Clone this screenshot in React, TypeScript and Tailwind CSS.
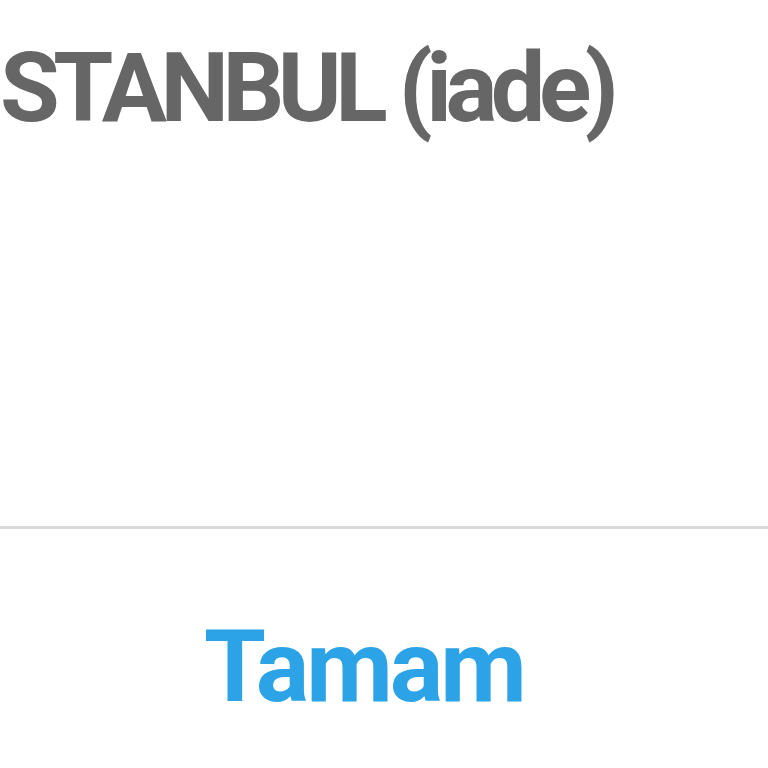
import React from 'react';

const App: React.FC = () => {
  return (
    <div className="w-[768px] h-[768px] bg-white overflow-hidden flex flex-col" style={{ fontFamily: 'Roboto, "Liberation Sans", sans-serif' }}>
      {/* başlık */}
      <div className="h-[526px] pt-[28px] pl-0">
        <h1 className="text-[97px] leading-[120px] font-bold text-[#666666] tracking-[-6.5px] whitespace-nowrap">
          STANBUL (iade)
        </h1>
      </div>

      <div className="h-[3px] bg-[#d9d9d9]" />

      <div className="flex-1 flex justify-center pt-[37px]">
        <button className="text-[100px] leading-[100px] font-bold text-[#2ba3e6] tracking-[-3px] mr-[40px]">
          Tamam
        </button>
      </div>
    </div>
  );
};

export default App;
